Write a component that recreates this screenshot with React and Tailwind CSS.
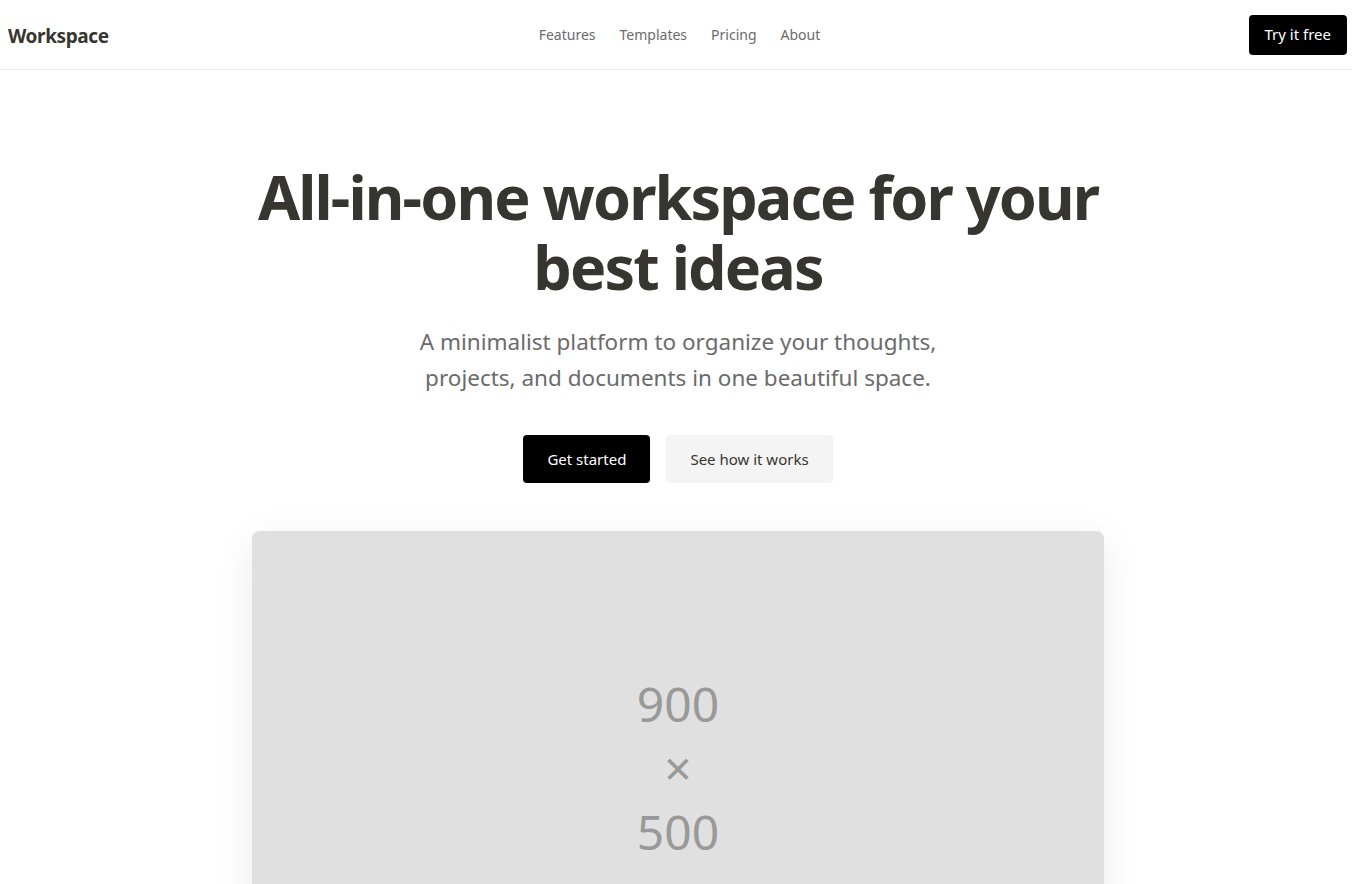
const font = { fontFamily: '"Noto Sans", "Open Sans", sans-serif' };

function Nav() {
  return (
    <header className="grid grid-cols-3 items-center h-[70px] pl-2 pr-[5px] border-b border-[#ececec] bg-white">
      <a href="#" className="justify-self-start mt-[3px] text-[19px] font-bold text-[#37352f] tracking-[-0.4px]">
        Workspace
      </a>
      <nav className="justify-self-center flex items-center gap-6 text-[14px] text-[#6b6b6b] ml-[4px]">
        <a href="#">Features</a>
        <a href="#">Templates</a>
        <a href="#">Pricing</a>
        <a href="#">About</a>
      </nav>
      <a
        href="#"
        className="justify-self-end bg-black text-white text-[15px] h-10 px-4 flex items-center rounded-[4px]"
      >
        Try it free
      </a>
    </header>
  );
}

function Hero() {
  return (
    <section className="flex flex-col items-center pt-[92px] pl-1 text-center">
      <h1 className="text-[61px] font-bold leading-[70px] text-[#37352f] tracking-[-1.9px] max-w-[900px]">
        All-in-one workspace for your best ideas
      </h1>
      <p className="mt-[22px] text-[22.5px] leading-[36px] text-[#6b6b6b] max-w-[580px]">
        A minimalist platform to organize your thoughts, projects, and documents in one beautiful space.
      </p>
      <div className="flex gap-4 mt-[39px]">
        <a href="#" className="bg-black text-white text-[15px] h-12 px-6 flex items-center rounded-[4px]">
          Get started
        </a>
        <a href="#" className="bg-[#f4f4f4] text-[#37352f] text-[15px] h-12 px-6 flex items-center rounded-[4px]">
          See how it works
        </a>
      </div>
      <div className="mt-12 w-[852px] h-[473px] bg-[#e0e0e0] rounded-lg shadow-[0_10px_40px_rgba(0,0,0,0.08)] flex items-center justify-center">
        <div className="flex flex-col items-center text-[48px] leading-[64px] text-[#999999]">
          <span>900</span>
          <span>×</span>
          <span>500</span>
        </div>
      </div>
    </section>
  );
}

export default function App() {
  return (
    <div className="min-h-screen bg-white" style={font}>
      <Nav />
      <Hero />
    </div>
  );
}
